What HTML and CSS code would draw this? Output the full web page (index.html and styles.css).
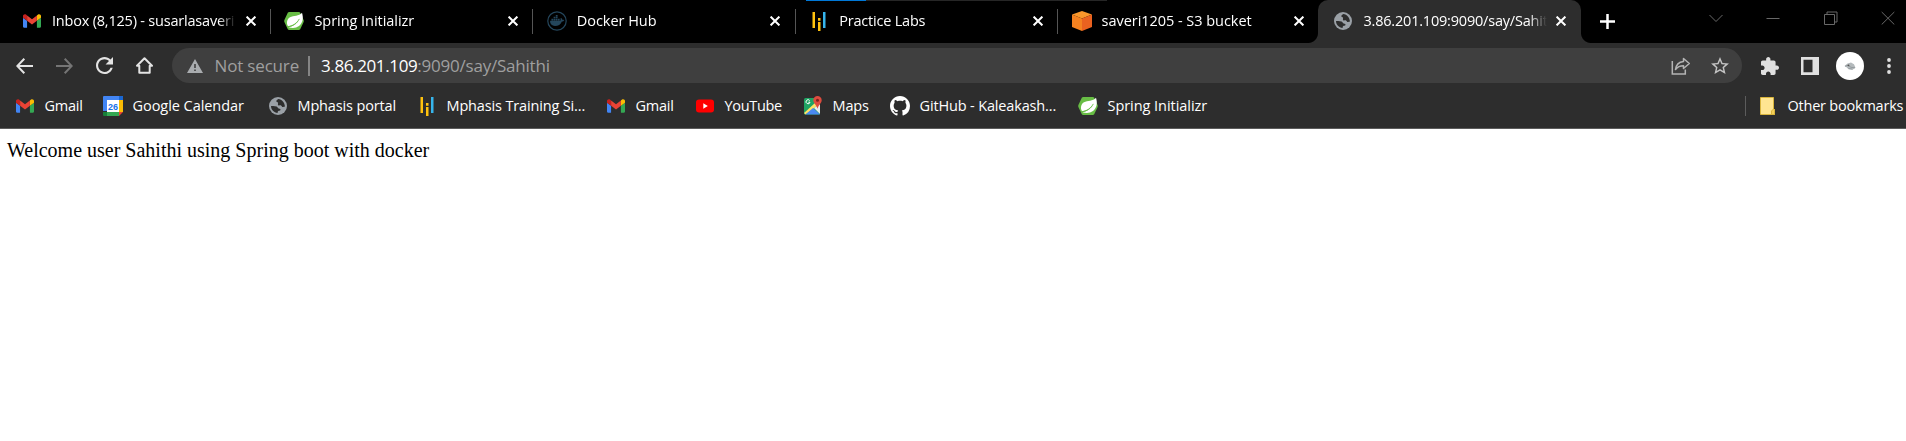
FILE: index.html
```html
<!DOCTYPE html>
<html lang="en">
<head>
<meta charset="utf-8">
<title>3.86.201.109:9090/say/Sahithi</title>
<link rel="stylesheet" href="styles.css">
</head>
<body>
<svg class="defs" width="0" height="0">
  <symbol id="gmail" viewBox="52 42 88 66">
    <path fill="#4285f4" d="M58 108h14V74L52 59v43c0 3.32 2.69 6 6 6"/>
    <path fill="#34a853" d="M120 108h14c3.32 0 6-2.69 6-6V59l-20 15"/>
    <path fill="#fbbc04" d="M120 48v26l20-15v-8c0-7.42-8.47-11.65-14.4-7.2"/>
    <path fill="#ea4335" d="M72 74V48l24 18 24-18v26L96 92"/>
    <path fill="#c5221f" d="M52 51v8l20 15V48l-5.6-4.2c-5.94-4.45-14.4-.22-14.4 7.2"/>
  </symbol>
  <symbol id="spring" viewBox="0 0 20 20">
    <path fill="#68bd45" d="M5.2 1h9.6q.9 0 1.4.8l3.4 7.3q.4.9 0 1.8l-3.4 7.3q-.5.8-1.4.8H5.2q-.9 0-1.4-.8L.4 10.9q-.4-.9 0-1.8l3.4-7.3Q4.3 1 5.2 1z"/>
    <path fill="#fff" d="M18 1.8C19.6 7 19 12 15 15c-3 2.200-7 2.300-10.500 1.200C9 15.500 13 12.500 14.800 8.800 12 12.600 8 14.800 4 15.200 2.200 12.500 2.700 8.300 6 6.300 9.500 4.300 15 5.500 18 1.800z"/>
    <path fill="none" stroke="#68bd45" stroke-width=".9" d="M4 15.700c5-.4 9-3.200 11.300-7.800"/>
  </symbol>
  <symbol id="docker" viewBox="0 0 20 20">
    <circle cx="10" cy="10" r="9.200" fill="none" stroke="#24465c" stroke-width="1.200"/>
    <path fill="#24465c" d="M3 9.800h10.300c.5-.7.400-1.600.1-2.300l.8-.6c.7.500 1 1.200 1.100 1.900.7-.1 1.400 0 1.900.4-.4.900-1.200 1.300-2.300 1.300-1.300 3-3.600 4.500-6.900 4.500C4.800 15 3 13.100 3 9.800zM4.400 7.700h1.800v1.700H4.400zM6.600 7.700h1.800v1.700H6.600zM8.800 7.700h1.800v1.700H8.800zM11 7.700h1.700v1.700H11zM6.600 5.700h1.800v1.600H6.600zM8.800 5.700h1.800v1.600H8.800zM8.800 3.900h1.800v1.500H8.800z"/>
  </symbol>
  <symbol id="labs" viewBox="0 0 20 20">
    <path fill="#ffc20e" d="M3.500 1H6v16H3.500zM9 7h2.500v2.700H9zM9 11h2.500v9H9z"/>
    <path fill="#36b5ec" d="M14 1h2.500v16H14z"/>
  </symbol>
  <symbol id="s3" viewBox="0 0 20 20">
    <path fill="#f9972b" d="M10 0l10 3.500L10 7.500 0 3.500z"/>
    <path fill="#f58220" d="M0 3.500l10 4V20L0 16z"/>
    <path fill="#ea6220" d="M20 3.500l-10 4V20l10-4z"/>
  </symbol>
  <symbol id="globe" viewBox="0 0 18 18">
    <circle cx="9" cy="9" r="9" fill="#9aa0a6"/>
    <path class="land" d="M9.300 1.900c-.8.800-2.200 1.200-2 2.400.1.900 1.400.7 1.700 1.500.3.900-.5 1.700.2 2.400.8.700 1.800-.1 2.800.2 1 .4.900 1.500 1.800 1.700.8.100 1.500-.5 2.200-.5C15.600 5.400 13.100 2.300 9.300 1.900zM2 9.100c1.600-.2 4-.3 5.600.5 1 .5 1 1.500 2 1.800.8.300 1.700.1 1.900 1 .1 1-.9 1.300-1.700 1.400-.9.200-1.100.9-1.200 2.200C4.900 15.700 2.100 13 2 9.100z"/>
  </symbol>
  <symbol id="close" viewBox="0 0 10 10">
    <path d="M.6.6l8.800 8.800M9.400.6L.6 9.400" fill="none" stroke="#fff" stroke-width="2"/>
  </symbol>
</svg>

<header class="tabstrip">
  <div class="loadbar"></div>
  <div class="tab">
    <svg class="fav gm"><use href="#gmail"/></svg>
    <span class="title tight">Inbox (8,125) - susarlasaveri</span>
    <svg class="x"><use href="#close"/></svg>
  </div>
  <div class="tab">
    <svg class="fav"><use href="#spring"/></svg>
    <span class="title">Spring Initializr</span>
    <svg class="x"><use href="#close"/></svg>
  </div>
  <div class="tab">
    <svg class="fav"><use href="#docker"/></svg>
    <span class="title">Docker Hub</span>
    <svg class="x"><use href="#close"/></svg>
  </div>
  <div class="tab">
    <svg class="fav"><use href="#labs"/></svg>
    <span class="title tight">Practice Labs</span>
    <svg class="x"><use href="#close"/></svg>
  </div>
  <div class="tab last">
    <svg class="fav"><use href="#s3"/></svg>
    <span class="title">saveri1205 - S3 bucket</span>
    <svg class="x"><use href="#close"/></svg>
  </div>
  <div class="tab active">
    <svg class="fav gl"><use href="#globe"/></svg>
    <span class="title tight">3.86.201.109:9090/say/Sahithi</span>
    <svg class="x"><use href="#close"/></svg>
  </div>
  <svg class="plus" viewBox="0 0 15 15"><path d="M7.500 0v15M0 7.500h15" stroke="#fff" stroke-width="2.500"/></svg>
  <div class="controls">
    <svg viewBox="0 0 14 14"><path d="M.5 4L7 10.500 13.500 4"/></svg>
    <svg viewBox="0 0 14 14"><path d="M.5 7.500h13"/></svg>
    <svg viewBox="0 0 14 14"><path d="M.5 3.500h10v10H.5zM3 3.500v-2.500h10v10h-2.500"/></svg>
    <svg viewBox="0 0 14 14"><path d="M.7 1l12.600 12.500M13.300 1L.7 13.500"/></svg>
  </div>
</header>

<nav class="toolbar">
  <div class="btn"><svg width="17" height="16" viewBox="0 0 17 16"><path d="M8.300.7L1.300 8l7 7.300M1.300 8H17" fill="none" stroke="#e3e3e3" stroke-width="2"/></svg></div>
  <div class="btn"><svg width="17" height="16" viewBox="0 0 17 16"><path d="M8.700.7l7 7.300-7 7.300M15.700 8H0" fill="none" stroke="#757575" stroke-width="2"/></svg></div>
  <div class="btn"><svg width="17" height="17" viewBox="4 4 16 16"><path fill="#e3e3e3" d="M17.650 6.350C16.200 4.900 14.210 4 12 4c-4.420 0-7.990 3.580-7.990 8s3.570 8 7.990 8c3.730 0 6.840-2.550 7.730-6h-2.080c-.82 2.330-3.040 4-5.650 4-3.310 0-6-2.690-6-6s2.690-6 6-6c1.660 0 3.140.69 4.220 1.780L13 11h7V4l-2.350 2.350z"/></svg></div>
  <div class="btn"><svg width="17" height="17" viewBox="0 0 17 17"><path fill="none" stroke="#e3e3e3" stroke-width="2" stroke-linejoin="round" d="M1 8.800L8.500 1.300 16 8.800h-2.300V15.800H3.300V8.800z"/></svg></div>
  <div class="omnibox">
    <svg width="16" height="14" viewBox="0 0 16 14"><path fill="#a9acaf" fill-rule="evenodd" d="M8 0l8 14H0zM7.200 5v4h1.600V5zM7.200 10.400V12h1.600v-1.600z"/></svg>
    <span class="notsecure">Not secure</span>
    <span class="bar"></span>
    <span class="url"><span class="host">3.86.201.109</span>:9090/say/Sahithi</span>
    <svg class="share" width="20" height="18" viewBox="0 0 20 18"><g fill="none" stroke="#b4b4b4" stroke-width="1.500"><path d="M1.300 4v13h13v-4.500"/><path stroke-linejoin="round" d="M12.500 1.500l5.800 5-5.800 5V8.800c-3.500 0-6 1-8 3.700.5-4 3-7.500 8-8z"/></g></svg>
    <svg width="18" height="17" viewBox="2 2 20 19"><path fill="#c4c4c4" d="M22 9.240l-7.190-.62L12 2 9.190 8.630 2 9.240l5.460 4.730L5.820 21 12 17.270 18.180 21l-1.630-7.030L22 9.240zM12 15.400l-3.760 2.270 1-4.280-3.320-2.880 4.380-.38L12 6.100l1.710 4.040 4.380.38-3.320 2.880 1 4.280L12 15.400z"/></svg>
  </div>
  <div class="btn"><svg width="18" height="18" viewBox="2 1 21 21"><path fill="#e0e0e0" d="M20.500 11H19V7c0-1.100-.9-2-2-2h-4V3.500C13 2.120 11.880 1 10.500 1S8 2.120 8 3.500V5H4c-1.100 0-1.990.9-1.990 2v3.800H3.500c1.490 0 2.700 1.210 2.700 2.700s-1.210 2.700-2.700 2.700H2V20c0 1.100.9 2 2 2h3.800v-1.500c0-1.490 1.210-2.700 2.700-2.700s2.700 1.210 2.700 2.700V22H17c1.100 0 2-.9 2-2v-4h1.500c1.380 0 2.500-1.120 2.500-2.500S21.880 11 20.500 11z"/></svg></div>
  <div class="btn"><svg width="18" height="18" viewBox="0 0 18 18"><path fill="#e0e0e0" fill-rule="evenodd" d="M0 0h18v18H0zM2.500 2.800v12.400h9V2.800z"/></svg></div>
  <div class="btn"><svg width="28" height="28" viewBox="0 0 28 28"><circle cx="14" cy="14" r="14" fill="#fff"/><path fill="#b4babc" d="M8.500 14l3-2.600 3.500-.9 3 1.700 1.500 3.600-3 2-4-.5-2-2z"/><path fill="none" stroke="#8a9295" stroke-width=".8" d="M9 14.300l3-1 3 2 4 .5M12.500 16.500l4 .7"/><circle cx="12.500" cy="13.300" r=".9" fill="#555"/></svg></div>
  <div class="btn dots"><svg width="4" height="16" viewBox="0 0 4 16"><g fill="#e0e0e0"><circle cx="2" cy="2" r="1.900"/><circle cx="2" cy="8" r="1.900"/><circle cx="2" cy="14" r="1.900"/></g></svg></div>
</nav>

<nav class="bookmarks">
  <div class="bm"><svg class="fav gm"><use href="#gmail"/></svg><span class="t2">Gmail</span></div>
  <div class="bm">
    <svg class="fav" viewBox="0 0 20 20"><path fill="#4285f4" d="M1 0h18q1 0 1 1v4H5v10H0V1Q0 0 1 0z"/><path fill="#1967d2" d="M16 0h3q1 0 1 1v3h-4z"/><path fill="#fbbc04" d="M16 4h4v12h-4z"/><path fill="#34a853" d="M4 16h12v4H4z"/><path fill="#188038" d="M0 16h4v4H1q-1 0-1-1z"/><path fill="#ea4335" d="M16 16h4l-4 4z"/><path fill="#fff" d="M4 4h12v12H4z"/><text x="10" y="13.500" text-anchor="middle" class="day">26</text></svg>
    <span>Google Calendar</span>
  </div>
  <div class="bm"><svg class="fav gl"><use href="#globe"/></svg><span class="t1">Mphasis portal</span></div>
  <div class="bm"><svg class="fav"><use href="#labs"/></svg><span class="t1">Mphasis Training Si...</span></div>
  <div class="bm"><svg class="fav gm"><use href="#gmail"/></svg><span class="t2">Gmail</span></div>
  <div class="bm"><svg class="fav" viewBox="0 0 20 20"><rect x="1" y="3.500" width="18" height="13" rx="3" fill="#f00"/><path fill="#fff" d="M8.300 7.300v5.400l4.500-2.700z"/></svg><span class="t3">YouTube</span></div>
  <div class="bm"><svg class="fav" viewBox="0 0 20 20"><path fill="#1fa463" d="M1 3.500Q1 2 2.500 2H14l3 6v9.500q0 1-1 1H2q-1 0-1-1z"/><path fill="#ffe168" d="M1 17L12 7l2.500 2.500L2.500 18.500z"/><path fill="#e8eaed" d="M11 12l6-4v10z"/><path fill="#4a89f3" d="M2.500 18.500L10 12l7 6.500z"/><path fill="none" stroke="#fff" d="M6.700 4.600a2 2 0 1 0 .3 1.600H5.300"/><path fill="#dd4b3e" d="M14.500 0a4.200 4.200 0 0 1 4.200 4.200c0 3-3 4-4.200 8.600-1.200-4.600-4.200-5.600-4.200-8.600A4.200 4.200 0 0 1 14.500 0z"/><circle cx="14.500" cy="4.300" r="1.500" fill="#7b231e"/></svg><span class="t1">Maps</span></div>
  <div class="bm"><svg class="fav" viewBox="0 0 16 16"><path fill="#fff" d="M8 0C3.580 0 0 3.580 0 8c0 3.540 2.290 6.530 5.470 7.590.4.070.55-.17.55-.38 0-.19-.01-.82-.01-1.490-2.010.37-2.530-.49-2.690-.94-.09-.23-.48-.94-.82-1.130-.28-.15-.68-.52-.01-.53.63-.01 1.080.58 1.230.82.72 1.210 1.870.87 2.330.66.070-.52.28-.87.51-1.070-1.780-.2-3.640-.89-3.640-3.950 0-.87.31-1.590.82-2.150-.08-.2-.36-1.020.08-2.120 0 0 .67-.21 2.200.82.640-.18 1.320-.27 2-.27s1.360.09 2 .27c1.530-1.040 2.200-.82 2.200-.82.440 1.100.160 1.920.080 2.120.510.560.820 1.270.820 2.150 0 3.070-1.870 3.750-3.650 3.950.290.250.540.730.540 1.480 0 1.070-.01 1.930-.01 2.200 0 .210.150.460.550.380A8.010 8.010 0 0 0 16 8c0-4.420-3.580-8-8-8z"/></svg><span class="t1">GitHub - Kaleakash...</span></div>
  <div class="bm"><svg class="fav"><use href="#spring"/></svg><span>Spring Initializr</span></div>
  <div class="bm other"><svg class="fav" viewBox="0 0 20 20"><path fill="#ffe591" stroke="#d9b53c" d="M2.500 1.500h13v12h1v5h-14z"/><path fill="#f5cf58" stroke="#d9b53c" d="M13.500 18.500v-3.500l2-2 1 .5v5z"/></svg><span class="t2">Other bookmarks</span></div>
</nav>

<main>Welcome user Sahithi using Spring boot with docker</main>
</body>
</html>
```
FILE: styles.css
```css
* { box-sizing: border-box; }

body {
  margin: 0;
  background: #fff;
  font-family: "Open Sans", "Noto Sans", sans-serif;
  font-size: 14.5px;
  color: #fff;
  overflow: hidden;
}

svg { flex: none; display: block; }
.defs { position: absolute; }
.land { fill: #2d2d2d; }

/* Tab strip */
.tabstrip {
  position: relative;
  display: flex;
  height: 43px;
  padding-left: 8px;
  background: #000;
}
.loadbar {
  position: absolute;
  top: 0;
  left: 806px;
  width: 301px;
  height: 1px;
  background: linear-gradient(90deg, #0078d7 60px, #262626 60px);
}
.tab {
  position: relative;
  display: flex;
  align-items: center;
  flex: none;
  width: 262.4px;
  height: 42px;
  padding-left: 14px;
}
.tab:not(.last):not(.active)::after {
  content: "";
  position: absolute;
  right: -.5px;
  top: 9px;
  width: 1px;
  height: 25px;
  background: #555;
}
.fav { width: 20px; height: 20px; }
.fav.gm { height: 14px; padding: 0 1px; }
.fav.gl { height: 18px; padding: 0 1px; }
.title {
  width: 184px;
  margin-left: 10px;
  padding-bottom: 2px;
  overflow: hidden;
  white-space: nowrap;
  letter-spacing: -.04px;
  -webkit-mask-image: linear-gradient(90deg, #000 166px, transparent 184px);
  mask-image: linear-gradient(90deg, #000 166px, transparent 184px);
}
.title.tight { letter-spacing: -.2px; }
.x { width: 10px; height: 10px; margin-left: 9.5px; }
.tab.last .x { margin-left: 8.5px; }
.tab.active {
  height: 43px;
  padding: 0 0 1px 15.5px;
  margin-left: -2px;
  width: 263px;
  border-radius: 10px 10px 0 0;
  background: #2d2d2d;
}
.tab.active .x { margin-left: 8.5px; }
.tab.active::before,
.tab.active::after {
  content: "";
  position: absolute;
  bottom: 0;
  width: 10px;
  height: 10px;
}
.tab.active::before {
  left: -10px;
  background: radial-gradient(circle at 0 0, #000 9.5px, #2d2d2d 10.5px);
}
.tab.active::after {
  right: -10px;
  background: radial-gradient(circle at 100% 0, #000 9.5px, #2d2d2d 10.5px);
}
.plus { width: 15px; height: 15px; margin: 14px 0 0 19.5px; }
.controls {
  display: flex;
  gap: 43.3px;
  padding-top: 11px;
  margin: 0 11px 0 auto;
}
.controls svg { width: 14px; height: 14px; }
.controls path { fill: none; stroke: #686868; stroke-width: 1; }

/* Toolbar */
.toolbar {
  display: flex;
  align-items: center;
  height: 45px;
  padding-left: 4.5px;
  background: #2d2d2d;
}
.btn {
  display: flex;
  align-items: center;
  justify-content: center;
  flex: none;
  width: 40px;
}
.btn.dots { width: 36.5px; padding-left: 2.5px; }
.omnibox {
  display: flex;
  align-items: center;
  flex: 1;
  height: 35px;
  margin: 0 7.5px;
  padding: 0 13px 0 15px;
  border-radius: 18px;
  background: #3f3f3f;
  font-size: 17px;
  white-space: nowrap;
}
.notsecure {
  width: 84px;
  margin-left: 11.5px;
  color: #9f9f9f;
  letter-spacing: -.17px;
}
.bar {
  width: 2px;
  height: 20px;
  margin: 0 11px 0 9.5px;
  background: #858585;
}
.url { color: #9f9f9f; letter-spacing: -.22px; }
.host { color: #fff; letter-spacing: -.38px; }
.share { margin-left: auto; margin-right: 20.5px; }

/* Bookmarks bar */
.bookmarks {
  display: grid;
  grid-template-columns: 88px 165px 149px 189px 89px 108px 87px 188px 1fr 161px;
  align-items: center;
  height: 41px;
  padding: 0 0 5px 15px;
  background: #2d2d2d;
  border-bottom: 1px solid #5c5c5c;
}
.bm {
  display: flex;
  align-items: center;
  gap: 9.5px;
  white-space: nowrap;
  letter-spacing: -.05px;
}
.t1 { letter-spacing: -.15px; }
.t2 { letter-spacing: -.22px; }
.t3 { letter-spacing: -.32px; }
.day { font: bold 9px "Liberation Sans", sans-serif; fill: #1a73e8; letter-spacing: 0; }
.other {
  height: 20px;
  padding-left: 12px;
  border-left: 1px solid #5c5c5c;
}

main {
  padding: 10px 7px;
  color: #000;
  font: 20px/23px "Liberation Serif", serif;
}
```
